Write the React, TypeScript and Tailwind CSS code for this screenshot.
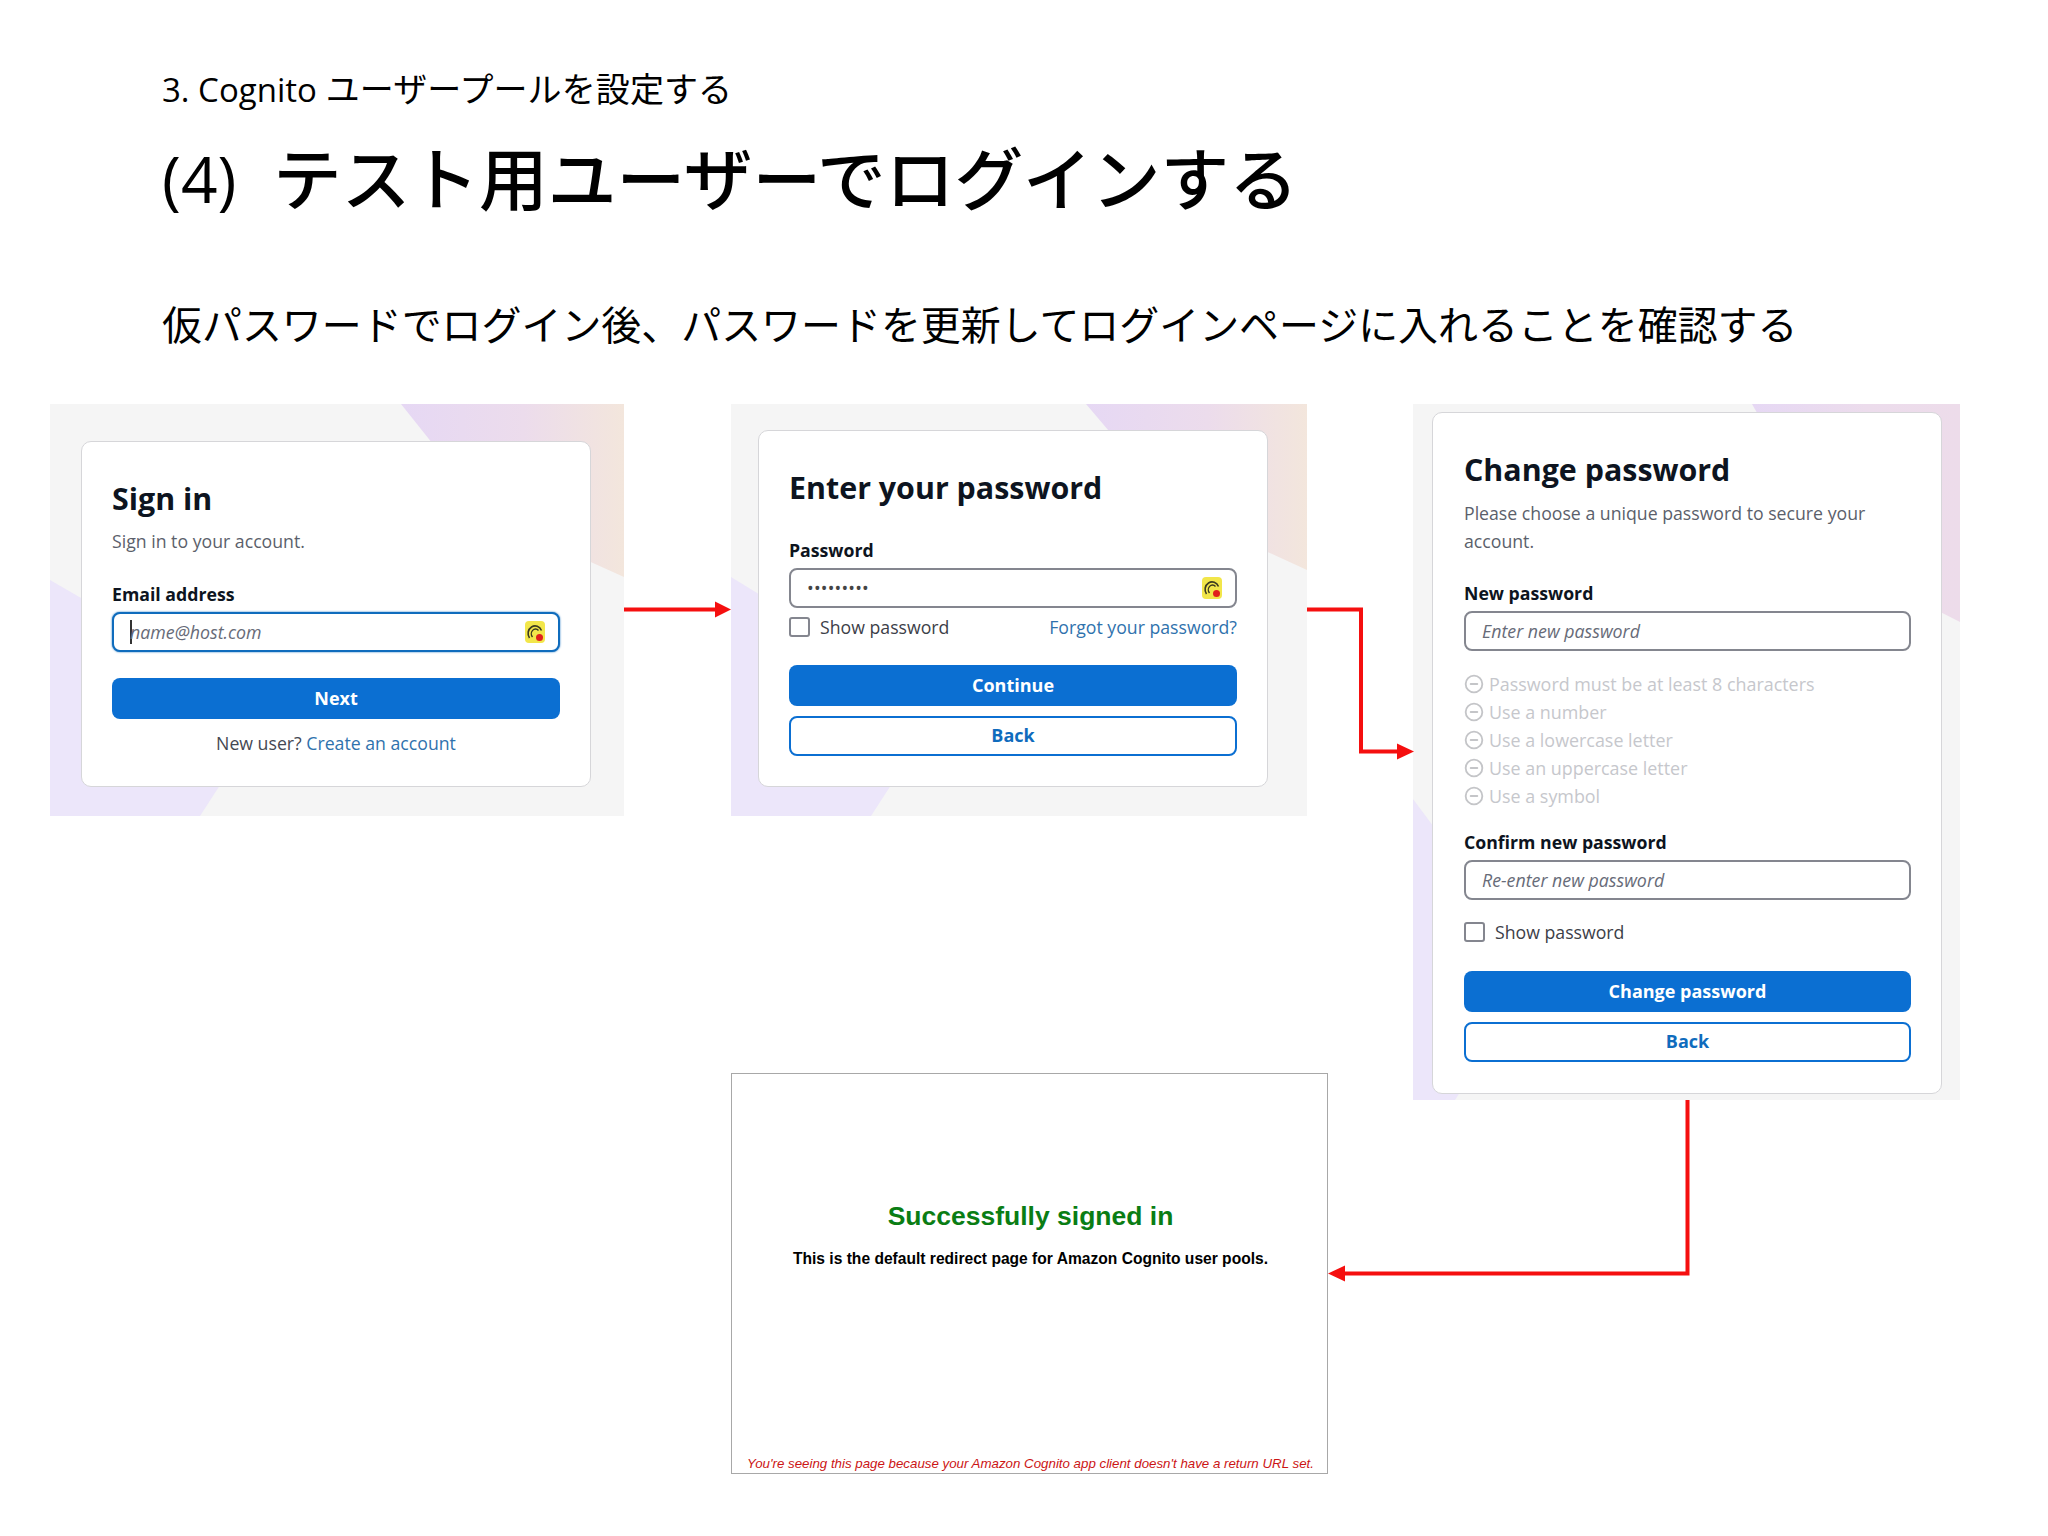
import React from "react";
import { CircleMinus } from "lucide-react";

const openSans = "font-['Open_Sans',sans-serif]";

function KeyIcon() {
  return (
    <svg width="20" height="22" viewBox="0 0 20 22" className="shrink-0 -ml-[2px]">
      <rect x="0" y="0" width="20" height="22" rx="4" fill="#f2e64a" />
      <path d="M4.500 17 A7 7.500 0 1 1 16.500 9.500" fill="none" stroke="#3b3a20" strokeWidth="1.6" />
      <path d="M7.500 16 A4 4.500 0 1 1 13.500 9.500" fill="none" stroke="#3b3a20" strokeWidth="1.4" />
      <circle cx="14.500" cy="16.500" r="3.500" fill="#e0201c" />
    </svg>
  );
}

function Backdrop({ id, w, h, top, right, left, bottom, peach = true }: { id: string; w: number; h: number; top: number; right: number; left: number; bottom: number; peach?: boolean }) {
  return (
    <svg width={w} height={h} viewBox={`0 0 ${w} ${h}`} className="absolute inset-0">
      <defs>
        <linearGradient id={id} x1="0" x2="1" y1="0" y2="0">
          <stop offset="0" stopColor="#e6d8f4" />
          <stop offset="0.55" stopColor="#ecdcec" />
          <stop offset="1" stopColor={peach ? "#f3e6dc" : "#eddcea"} />
        </linearGradient>
      </defs>
      <rect width={w} height={h} fill="#f5f5f5" />
      <polygon points={`${top},0 ${w},0 ${w},${right} ${top + 90},${right - 60}`} fill={`url(#${id})`} />
      <polygon points={`0,${left} ${bottom + 40},${left + 110} ${bottom + 22},${h - 34} ${bottom},${h} 0,${h}`} fill="#ece6fa" />
    </svg>
  );
}

function Panel({ id, x, w, h, top, right, left, bottom, peach, cardClass, children }: { id: string; x: string; w: number; h: number; top: number; right: number; left: number; bottom: number; peach?: boolean; cardClass: string; children: React.ReactNode }) {
  return (
    <section className={`absolute top-[404px] ${x} ${openSans}`} style={{ width: w, height: h }}>
      <Backdrop id={id} w={w} h={h} top={top} right={right} left={left} bottom={bottom} peach={peach} />
      <div className={`absolute bg-white border border-[#d6d6d9] rounded-[10px] ${cardClass}`}>{children}</div>
    </section>
  );
}

function Label({ children, className = "" }: { children: React.ReactNode; className?: string }) {
  return <div className={`text-[17.7px] leading-[24px] font-bold text-[#0d1420] ${className}`}>{children}</div>;
}

function Field({ text, italic = true, active = false, icon = false, caret = false }: { text: string; italic?: boolean; active?: boolean; icon?: boolean; caret?: boolean }) {
  return (
    <div className={`h-[40px] rounded-[8px] border-[2.5px] flex items-center justify-between pl-[16px] pr-[13px] bg-white ${active ? "border-[#0f6cbd] shadow-[0_0_2px_#0f6cbd]" : "border-[#84868f]"}`}>
      <div className="flex items-center">
        {caret && <span className="w-[2px] h-[24px] bg-[#333] -mr-[2px]" />}
        <span className={`text-[17.8px] ${italic ? "italic text-[#676b78]" : "text-[#444] tracking-[0.2px]"}`}>{text}</span>
      </div>
      {icon && <KeyIcon />}
    </div>
  );
}

function Primary({ children }: { children: React.ReactNode }) {
  return <div className="h-[41px] rounded-[8px] bg-[#0b6fd2] text-white text-[18px] font-bold flex items-center justify-center">{children}</div>;
}

function Secondary({ children, className = "" }: { children: React.ReactNode; className?: string }) {
  return <div className={`h-[40px] rounded-[8px] border-[2.5px] border-[#0b6fd2] bg-white text-[#0f6cbd] text-[18px] font-bold flex items-center justify-center ${className}`}>{children}</div>;
}

function Check({ label }: { label: string }) {
  return (
    <div className="flex items-center gap-[10px]">
      <span className="w-[21px] h-[20px] rounded-[3px] border-[2.5px] border-[#84868f] bg-white" />
      <span className="text-[17.7px] text-[#3c4048]">{label}</span>
    </div>
  );
}

const rules = ["Password must be at least 8 characters", "Use a number", "Use a lowercase letter", "Use an uppercase letter", "Use a symbol"];

export default function App() {
  return (
    <div className="relative w-[2048px] h-[1536px] bg-white overflow-hidden text-black">
      <header className="pl-[162px] pt-[64px] font-['Open_Sans','Noto_Sans_CJK_JP',sans-serif]">
        <div className="text-[34px] leading-[50px] font-normal"><span className="text-[33px]">3. Cognito</span> <span className="tracking-[0.1px]">ユーザープールを設定する</span></div>
        <h1 className="mt-[23px] flex items-center text-[68.700px] leading-[82px] font-medium">
          <span className="w-[112px] text-[64px] font-normal">(4)</span>
          <span className="-ml-[1px]">テスト用ユーザーでログインする</span>
        </h1>
        <p className="mt-[75px] text-[39.950px] leading-[60px] font-normal">仮パスワードでログイン後、パスワードを更新してログインページに入れることを確認する</p>
      </header>

      <Panel id="g1" x="left-[50px]" w={574} h={412} top={351} right={173} left={176} bottom={150} cardClass="left-[31px] top-[37px] w-[510px] h-[346px] px-[30px] pt-[36px]">
        <h2 className="text-[30.400px] leading-[42px] font-bold text-[#0d1420]">Sign in</h2>
        <p className="mt-[8px] text-[17.700px] leading-[26px] text-[#5b5f6b]">Sign in to your account.</p>
        <Label className="mt-[28px]">Email address</Label>
        <div className="mt-[6px]"><Field text="name@host.com" active icon caret /></div>
        <div className="mt-[26px]"><Primary>Next</Primary></div>
        <p className="mt-[11px] text-center text-[17.700px] leading-[26px] text-[#444852]">New user? <span className="text-[#2f72ad]">Create an account</span></p>
      </Panel>

      <Panel id="g2" x="left-[731px]" w={576} h={412} top={355} right={166} left={173} bottom={140} cardClass="left-[27px] top-[26px] w-[510px] h-[357px] px-[30px] pt-[36px]">
        <h2 className="text-[30.400px] leading-[42px] font-bold text-[#0d1420]">Enter your password</h2>
        <Label className="mt-[29px]">Password</Label>
        <div className="mt-[6px]"><Field text="•••••••••" italic={false} icon /></div>
        <div className="mt-[6px] flex items-center justify-between">
          <Check label="Show password" />
          <span className="text-[17.700px] text-[#2f72ad]">Forgot your password?</span>
        </div>
        <div className="mt-[24px]"><Primary>Continue</Primary></div>
        <Secondary className="mt-[10px]">Back</Secondary>
      </Panel>

      <Panel id="g3" x="left-[1413px]" w={547} h={696} top={339} right={218} left={395} bottom={42} peach={false} cardClass="left-[19px] top-[8px] w-[510px] h-[682px] pl-[31px] pr-[30px] pt-[36px]">
        <h2 className="text-[30.400px] leading-[42px] font-bold text-[#0d1420]">Change password</h2>
        <p className="mt-[8px] text-[17.700px] leading-[28px] text-[#5b5f6b]">Please choose a unique password to secure your account.</p>
        <Label className="mt-[26px]">New password</Label>
        <div className="mt-[6px]"><Field text="Enter new password" /></div>
        <ul className="mt-[19px] text-[17.900px] leading-[28px] text-[#c6c7cc]">
          {rules.map((r) => (
            <li key={r} className="flex items-center gap-[5px]">
              <CircleMinus size={20} strokeWidth={2.2} className="text-[#c4c5c8]" />
              <span>{r}</span>
            </li>
          ))}
        </ul>
        <Label className="mt-[20px]">Confirm new password</Label>
        <div className="mt-[6px]"><Field text="Re-enter new password" /></div>
        <div className="mt-[19px]"><Check label="Show password" /></div>
        <div className="mt-[25px]"><Primary>Change password</Primary></div>
        <Secondary className="mt-[10px]">Back</Secondary>
      </Panel>

      <section className="absolute left-[731px] top-[1073px] w-[597px] h-[401px] pl-[2px] border border-[#a8a8a8] font-['Liberation_Sans',Arial,sans-serif] flex flex-col items-center bg-white">
        <h2 className="mt-[124px] text-[26.500px] leading-[36px] font-bold text-[#0a7d14]">Successfully signed in</h2>
        <p className="mt-[15px] text-[15.600px] leading-[20px] font-bold text-black">This is the default redirect page for Amazon Cognito user pools.</p>
        <p className="mt-auto text-[13.300px] leading-[18px] italic text-[#cc1414]">You're seeing this page because your Amazon Cognito app client doesn't have a return URL set.</p>
      </section>

      <svg width="2048" height="1536" viewBox="0 0 2048 1536" className="absolute inset-0 pointer-events-none" fill="none">
        <path d="M624 609.500H716" stroke="#f50f0f" strokeWidth="4" />
        <polygon points="731,609.500 715,601.500 715,617.500" fill="#f50f0f" />
        <path d="M1307 609.500H1361V751.500H1398" stroke="#f50f0f" strokeWidth="4" />
        <polygon points="1414,751.500 1397,743.500 1397,759.500" fill="#f50f0f" />
        <path d="M1687.500 1100V1273.500H1343" stroke="#f50f0f" strokeWidth="4" />
        <polygon points="1328,1273.500 1345,1265.500 1345,1281.500" fill="#f50f0f" />
      </svg>
    </div>
  );
}
